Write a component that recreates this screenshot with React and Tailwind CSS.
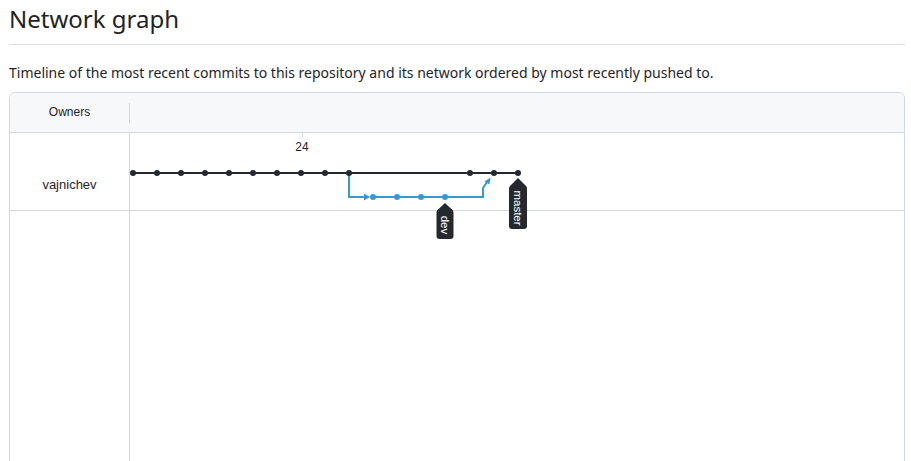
import React from "react";

function Label({ cx, tip, shoulder, bottom, w, text }) {
  const l = cx - w / 2;
  const r = cx + w / 2;
  const d = `M ${cx} ${tip} L ${r - 1} ${shoulder - 1} Q ${r} ${shoulder} ${r} ${shoulder + 2} L ${r} ${bottom - 3} Q ${r} ${bottom} ${r - 3} ${bottom} L ${l + 3} ${bottom} Q ${l} ${bottom} ${l} ${bottom - 3} L ${l} ${shoulder + 2} Q ${l} ${shoulder} ${l + 1} ${shoulder - 1} Z`;
  const cy = (shoulder + bottom) / 2;
  return (
    <g>
      <path d={d} fill="#24292f" />
      <text
        x={cx}
        y={cy}
        fill="#ffffff"
        fontSize="11.5"
        fontFamily="'Liberation Sans', Arial, sans-serif"
        textAnchor="middle"
        dominantBaseline="central"
        transform={`rotate(90 ${cx} ${cy})`}
      >
        {text}
      </text>
    </g>
  );
}

function Graph() {
  const main = [3, 27, 51, 75, 99, 123, 147, 171, 195, 219, 340, 364, 388];
  const blue = [243, 267, 291, 315];
  const dark = "#24292f";
  const bl = "#3498db";
  return (
    <svg
      className="absolute left-[120px] top-0 overflow-visible"
      width="780"
      height="300"
    >
      <line x1="172.5" y1="0" x2="172.5" y2="4" stroke="#d1d9e0" strokeWidth="1" />
      <text
        x="172"
        y="17.5"
        fontSize="12"
        fill="#1f2328"
        textAnchor="middle"
        fontFamily="'Liberation Sans', Arial, sans-serif"
      >
        24
      </text>
      <line x1="3" y1="40" x2="388" y2="40" stroke={dark} strokeWidth="2" />
      <path
        d="M 219 40 L 219 64 L 236 64"
        fill="none"
        stroke={bl}
        strokeWidth="2"
      />
      <path d="M 234 60.5 L 240 64 L 234 67.5 Z" fill={bl} />
      <path
        d="M 243 64 L 353 64 L 353 55 L 357 49"
        fill="none"
        stroke={bl}
        strokeWidth="2"
      />
      <path d="M 354.5 48.5 L 360.5 44.5 L 359.5 51.5 Z" fill={bl} />
      {blue.map((x) => (
        <circle key={x} cx={x} cy="64" r="3" fill={bl} />
      ))}
      {main.map((x) => (
        <circle key={x} cx={x} cy="40" r="3" fill={dark} />
      ))}
      <Label cx={315} tip={70} shoulder={78} bottom={106} w={17} text="dev" />
      <Label cx={388} tip={45} shoulder={54} bottom={96} w={18} text="master" />
    </svg>
  );
}

export default function App() {
  return (
    <div className="pl-[9px] pr-[6px] pt-[4px] text-[#1f2328] bg-white">
      <h2 className="font-['Noto_Sans',sans-serif] text-[24px] leading-[30px] font-normal pb-[10px] border-b border-[#d8dee4]">
        Network graph
      </h2>
      <p className="font-['Noto_Sans',sans-serif] text-[14px] leading-[21px] mt-[17px] mb-[9px]">
        Timeline of the most recent commits to this repository and its network ordered by most recently pushed to.
      </p>
      <div className="border border-[#d1d9e0] rounded-md font-['Liberation_Sans',Arial,sans-serif]">
        <div className="flex items-center h-[40px] bg-[#f6f8fa] border-b border-[#d1d9e0] rounded-t-md">
          <div className="w-[119px] text-center text-[12px] leading-[14px] -mt-[2px] text-[#1f2328]">Owners</div>
          <div className="w-px h-[20px] bg-[#d1d9e0]" />
        </div>
        <div className="relative">
          <div className="flex h-[78px] border-b border-[#d1d9e0]">
            <div className="w-[120px] border-r border-[#d1d9e0] pt-[44px] text-center text-[13px] leading-[16px] text-[#1f2328]">
              vajnichev
            </div>
          </div>
          <div className="flex h-[300px]">
            <div className="w-[120px] border-r border-[#d1d9e0]" />
          </div>
          <Graph />
        </div>
      </div>
    </div>
  );
}
